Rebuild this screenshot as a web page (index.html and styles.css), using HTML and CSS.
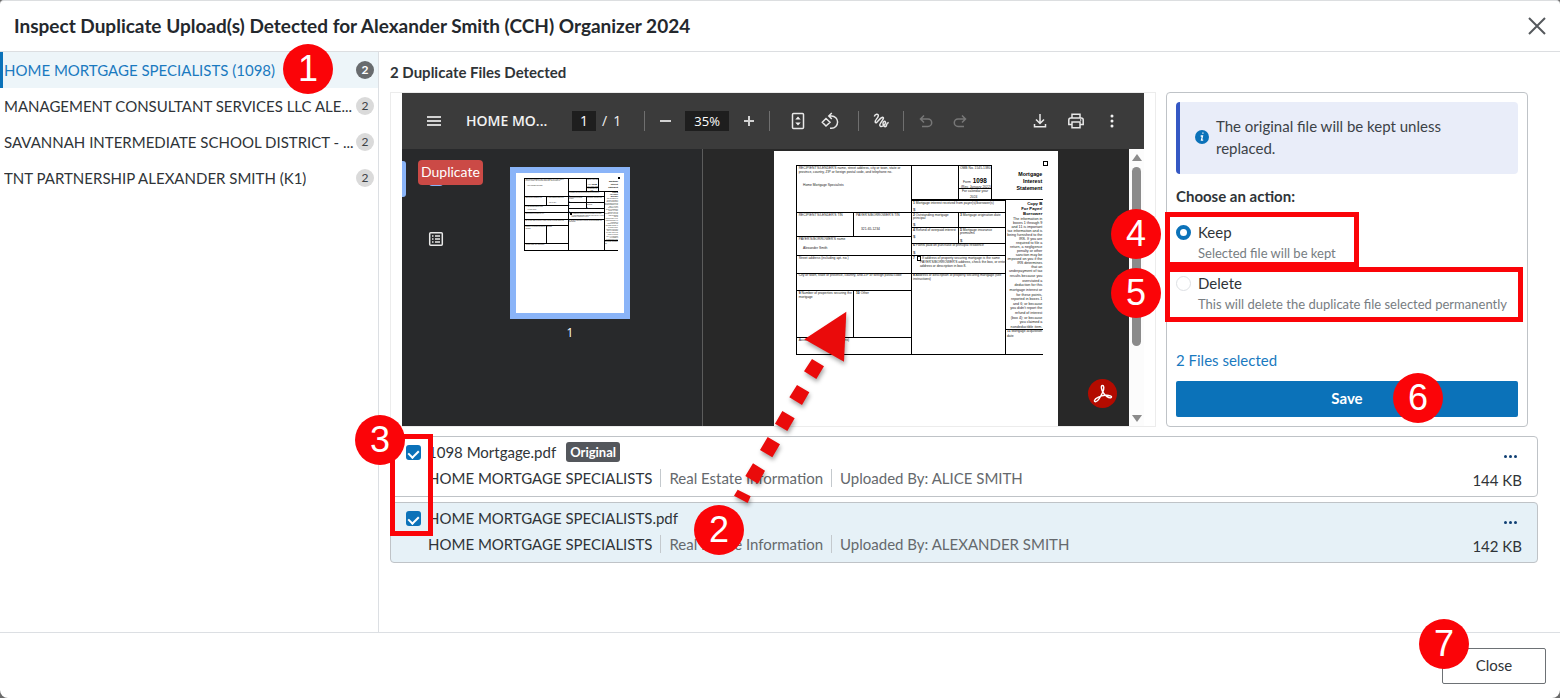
FILE: index.html
```html
<!DOCTYPE html>
<html lang="en">
<head>
<meta charset="utf-8">
<title>Inspect Duplicate Uploads</title>
<meta name="viewport" content="width=device-width, initial-scale=1">
<link rel="stylesheet" href="styles.css">
</head>
<body>
<div class="dialog" role="dialog" aria-labelledby="dialog-title">
  <header class="dialog-header">
    <h1 id="dialog-title">Inspect Duplicate Upload(s) Detected for Alexander Smith (CCH) Organizer 2024</h1>
    <button class="dismiss" type="button" aria-label="Close dialog">
      <svg width="20" height="20" viewBox="0 0 20 20"><path d="M2 2L18 18M18 2L2 18"/></svg>
    </button>
  </header>

  <div class="dialog-body">
    <nav class="groups" aria-label="Duplicate groups">
      <a class="group active" href="#g1"><span class="group-name">HOME MORTGAGE SPECIALISTS (1098)</span><span class="count">2</span><span class="step step-1">1</span></a>
      <a class="group" href="#g2"><span class="group-name">MANAGEMENT CONSULTANT SERVICES LLC ALE...</span><span class="count">2</span></a>
      <a class="group" href="#g3"><span class="group-name">SAVANNAH INTERMEDIATE SCHOOL DISTRICT - ...</span><span class="count">2</span></a>
      <a class="group" href="#g4"><span class="group-name">TNT PARTNERSHIP ALEXANDER SMITH (K1)</span><span class="count">2</span></a>
    </nav>

    <main class="content">
      <h2>2 Duplicate Files Detected</h2>
      <div class="review">
        <section class="preview" aria-label="File preview">
          <div class="toolbar">
            <button class="tool" type="button" aria-label="Menu"><svg width="16" height="16" viewBox="0 0 16 16"><path class="bold" d="M1 4H15M1 8H15M1 12H15"/></svg></button>
            <span class="doc-title">HOME MO...</span>
            <div class="pager"><input class="page-input" type="text" value="1" aria-label="Page"><span>/</span><span>1</span></div>
            <span class="divider"></span>
            <div class="tools">
              <button class="tool" type="button" aria-label="Zoom out"><svg width="16" height="16" viewBox="0 0 16 16"><path class="bold" d="M3 8H14"/></svg></button>
              <input class="zoom-input" type="text" value="35%" aria-label="Zoom">
              <button class="tool" type="button" aria-label="Zoom in"><svg width="16" height="16" viewBox="0 0 16 16"><path class="bold" d="M3 8H13M8 3V13"/></svg></button>
            </div>
            <span class="divider"></span>
            <div class="tools tools-wide">
              <button class="tool" type="button" aria-label="Fit to page"><svg width="18" height="18" viewBox="0 0 18 18"><rect x="3.500" y="1.500" width="11" height="15" rx="1"/><path class="fill" d="M6.300 7.500L9 4.500L11.700 7.500ZM6.300 10.500L9 13.500L11.700 10.500Z"/></svg></button>
              <button class="tool" type="button" aria-label="Rotate"><svg width="18" height="18" viewBox="0 0 18 18"><path d="M5 6.500L9 10.300L5 14L1.300 10.300ZM8.500 4H10.500A6 6 0 0 1 10.500 16.200H9M10.800 1L7.800 4L10.800 7"/></svg></button>
            </div>
            <span class="divider"></span>
            <div class="tools tools-edit">
              <button class="tool" type="button" aria-label="Annotate"><svg width="18" height="18" viewBox="0 0 18 18"><path d="M2.300 4.500C3 2 6.500 1.300 6.300 3.800C6 6.300 2.300 8.300 3.300 10.300C4.800 12.300 8 5.300 10.700 5.300C13.300 6 8 10.500 7.700 13C8 16.300 13.300 13.500 13.500 10.700C13.300 8 10.700 9.500 11 12C11.300 14.500 13 15.300 14.300 14C14.800 12.500 14.300 11 16.700 10.500"/></svg></button>
              <span class="divider"></span>
              <button class="tool dim" type="button" aria-label="Undo" disabled><svg width="18" height="18" viewBox="0 0 18 18"><path d="M7 3.500L3.500 7L7 10.500M3.500 7H11A3.700 3.700 0 0 1 11 14.400H5"/></svg></button>
              <button class="tool dim" type="button" aria-label="Redo" disabled><svg width="18" height="18" viewBox="0 0 18 18"><path d="M11 3.500L14.500 7L11 10.500M14.500 7H7A3.700 3.700 0 0 0 7 14.400H13"/></svg></button>
            </div>
            <div class="tools-end">
              <button class="tool" type="button" aria-label="Download"><svg width="18" height="18" viewBox="0 0 18 18"><path d="M9 2V11M5 7.500L9 11.500L13 7.500M3.500 12V14.700H14.500V12"/></svg></button>
              <button class="tool" type="button" aria-label="Print"><svg width="18" height="18" viewBox="0 0 18 18"><path d="M5 5.500V2.200H13V5.500M5 12.500H1.800V8Q1.800 6 3.800 6H14.200Q16.200 6 16.200 8V12.500H13M5 10H13V15.700H5Z"/><path d="M13 8H14.300"/></svg></button>
              <button class="tool" type="button" aria-label="More"><svg width="18" height="18" viewBox="0 0 18 18"><circle class="fill" cx="9" cy="4" r="1.500"/><circle class="fill" cx="9" cy="9" r="1.500"/><circle class="fill" cx="9" cy="14" r="1.500"/></svg></button>
            </div>
          </div>
          <div class="viewer">
            <div class="rail">
              <span class="rail-current"></span>
              <span class="rail-thumbs"></span>
              <span class="duplicate-tag">Duplicate</span>
              <button class="tool" type="button" aria-label="Document outline"><svg width="16" height="16" viewBox="0 0 16 16"><rect x="1.700" y="1.700" width="12.600" height="12.600" rx="1"/><path d="M4 5H5.500M7 5H12M4 8H5.500M7 8H12M4 11H5.500M7 11H12"/></svg></button>
            </div>
            <div class="thumbs">
              <figure class="thumb">
                <svg class="thumb-page" viewBox="-18 18 852 1104" aria-label="Page 1"><use href="#form1098"/></svg>
                <figcaption>1</figcaption>
              </figure>
            </div>
            <div class="canvas">
              <svg class="page" width="284" height="368" viewBox="-18 18 852 1104">
                <g id="form1098">
                  <g class="form-lines">
                    <path d="M50 61H635V163M50 61V628H789M395 61V628M536 61V163M536 130H635M395 163H789M395 167H677M677 163V628M50 203H395M221 203V274M50 274H395M50 332H395M50 385H395M50 436H395M221 436V577M50 577H395M395 203H677M536 203V295M395 247H677M395 295H677M395 332H677M395 385H677M677 553H789"/>
                    <path d="M412 333H422V347H412Z"/>
                    <path class="form-mark" d="M790 50H802V62H790Z"/>
                  </g>
                  <g class="form-text">
                    <text x="56" y="72">RECIPIENT'S/LENDER'S name, street address, city or town, state or</text>
                    <text x="56" y="83">province, country, ZIP or foreign postal code, and telephone no.</text>
                    <text x="69" y="122">Home Mortgage Specialists</text>
                    <text x="56" y="213">RECIPIENT'S/LENDER'S TIN</text>
                    <text x="228" y="213">PAYER'S/BORROWER'S TIN</text>
                    <text x="243" y="255">321-65-1234</text>
                    <text x="56" y="285">PAYER'S/BORROWER'S name</text>
                    <text x="69" y="312">Alexander Smith</text>
                    <text x="56" y="342">Street address (including apt. no.)</text>
                    <text x="56" y="394">City or town, state or province, country, and ZIP or foreign postal code</text>
                    <text x="56" y="447"><tspan class="strong">9</tspan> Number of properties securing the</text>
                    <text x="56" y="458">mortgage</text>
                    <text x="228" y="447"><tspan class="strong">10</tspan> Other</text>
                    <text x="56" y="588">Account number (see instructions)</text>
                    <text x="540" y="72">OMB No. 1545-1380</text>
                    <text x="549" y="113">Form</text>
                    <text class="form-number" x="578" y="114">1098</text>
                    <text x="543" y="128">(Rev. January 2022)</text>
                    <text x="546" y="141">For calendar year</text>
                    <text x="570" y="158">2024</text>
                    <text x="399" y="177"><tspan class="strong">1</tspan> Mortgage interest received from payer(s)/borrower(s)</text>
                    <text class="form-dollar" x="399" y="197">$</text>
                    <text x="399" y="213"><tspan class="strong">2</tspan> Outstanding mortgage</text>
                    <text x="399" y="222">principal</text>
                    <text class="form-dollar" x="399" y="243">$</text>
                    <text x="540" y="213"><tspan class="strong">3</tspan> Mortgage origination date</text>
                    <text x="399" y="258"><tspan class="strong">4</tspan> Refund of overpaid interest</text>
                    <text class="form-dollar" x="399" y="279">$</text>
                    <text x="540" y="258"><tspan class="strong">5</tspan> Mortgage insurance</text>
                    <text x="540" y="267">premiums</text>
                    <text class="form-dollar" x="540" y="291">$</text>
                    <text x="399" y="304"><tspan class="strong">6</tspan> Points paid on purchase of principal residence</text>
                    <text class="form-dollar" x="399" y="327">$</text>
                    <text x="399" y="342"><tspan class="strong">7</tspan></text>
                    <text x="426" y="342">If address of property securing mortgage is the same</text>
                    <text x="420" y="354">PAYER'S/BORROWER'S address, check the box, or enter</text>
                    <text x="420" y="366">address or description in box 8.</text>
                    <text x="399" y="394"><tspan class="strong">8</tspan> Address or description of property securing mortgage (see</text>
                    <text x="399" y="405">instructions)</text>
                    <text x="681" y="562"><tspan class="strong">11</tspan> Mortgage acquisition</text>
                    <text x="681" y="576">date</text>
                  </g>
                  <g class="form-title">
                    <text x="787" y="93">Mortgage</text>
                    <text x="787" y="114">Interest</text>
                    <text x="787" y="135">Statement</text>
                  </g>
                  <g class="form-copy">
                    <text x="787" y="179">Copy B</text>
                    <text x="787" y="194">For Payer/</text>
                    <text x="787" y="210">Borrower</text>
                  </g>
                  <g class="form-note">
                    <text x="787" y="224">The information in</text>
                    <text x="787" y="236">boxes 1 through 9</text>
                    <text x="787" y="248">and 11 is important</text>
                    <text x="787" y="260">tax information and is</text>
                    <text x="787" y="272">being furnished to the</text>
                    <text x="787" y="284">IRS. If you are</text>
                    <text x="787" y="296">required to file a</text>
                    <text x="787" y="308">return, a negligence</text>
                    <text x="787" y="320">penalty or other</text>
                    <text x="787" y="332">sanction may be</text>
                    <text x="787" y="344">imposed on you if the</text>
                    <text x="787" y="356">IRS determines</text>
                    <text x="787" y="368">that an</text>
                    <text x="787" y="380">underpayment of tax</text>
                    <text x="787" y="396">results because you</text>
                    <text x="787" y="410">overstated a</text>
                    <text x="787" y="423">deduction for this</text>
                    <text x="787" y="438">mortgage interest or</text>
                    <text x="787" y="452">for these points,</text>
                    <text x="787" y="465">reported in boxes 1</text>
                    <text x="787" y="479">and 6; or because</text>
                    <text x="787" y="492">you didn't report the</text>
                    <text x="787" y="506">refund of interest</text>
                    <text x="787" y="521">(box 4); or because</text>
                    <text x="787" y="534">you claimed a</text>
                    <text x="787" y="548">nondeductible item.</text>
                  </g>
                </g>
              </svg>
              <button class="acrobat" type="button" aria-label="Open in Acrobat"><svg width="20" height="20" viewBox="0 0 20 20"><path d="M9.500 1.500C7.300 1.500 8.800 6.500 10.200 8.700C12 11.700 15.800 14.500 18 13.700C20 12.300 16 10.800 12 11.300C8 11.700 2 14 1.500 16.500C1.200 18.500 4 18 6 14.800C8 11.800 11 6.500 10.800 3.200C10.700 2 10.300 1.500 9.500 1.500Z"/></svg></button>
            </div>
            <div class="scrollbar"><span class="arrow-up"></span><span class="thumb-bar"></span><span class="arrow-down"></span></div>
          </div>
        </section>

        <form class="actions">
          <div class="notice">
            <svg class="info" width="14" height="14" viewBox="0 0 14 14"><circle cx="7" cy="7" r="7"/><path d="M7.300 3.200H8.500M5.700 6H7.500L6.500 10.200H8.200"/></svg>
            <p>The original file will be kept unless replaced.</p>
          </div>
          <fieldset>
            <legend>Choose an action:</legend>
            <div class="option option-keep">
              <input type="radio" name="action" id="keep" checked>
              <label for="keep">Keep<small>Selected file will be kept</small></label>
              <span class="frame"></span><span class="step step-4">4</span>
            </div>
            <div class="option option-delete">
              <input type="radio" name="action" id="delete">
              <label for="delete">Delete<small>This will delete the duplicate file selected permanently</small></label>
              <span class="frame"></span><span class="step step-5">5</span>
            </div>
          </fieldset>
          <p class="selected">2 Files selected</p>
          <div class="save-wrap"><button class="save" type="button">Save</button><span class="step step-6">6</span></div>
        </form>
      </div>

      <div class="files">
        <article class="file">
          <input type="checkbox" id="file1" checked>
          <div class="file-info">
            <div class="file-name"><label for="file1">1098 Mortgage.pdf</label><span class="original-tag">Original</span></div>
            <div class="file-meta"><span class="owner">HOME MORTGAGE SPECIALISTS</span><span>Real Estate Information</span><span>Uploaded By: ALICE SMITH</span></div>
          </div>
          <div class="file-end"><button class="more" type="button" aria-label="File options"><i></i><i></i><i></i></button><span>144 KB</span></div>
        </article>
        <article class="file current">
          <input type="checkbox" id="file2" checked>
          <div class="file-info">
            <div class="file-name"><label for="file2">HOME MORTGAGE SPECIALISTS.pdf</label></div>
            <div class="file-meta"><span class="owner">HOME MORTGAGE SPECIALISTS</span><span>Real Estate Information</span><span>Uploaded By: ALEXANDER SMITH</span></div>
          </div>
          <div class="file-end"><button class="more" type="button" aria-label="File options"><i></i><i></i><i></i></button><span>142 KB</span></div>
        </article>
        <span class="frame frame-3"></span><span class="step step-3">3</span>
        <svg class="pointer" width="125" height="205" viewBox="120 15 375 615" aria-hidden="true">
          <path d="M469 35L343 118L462 185Z"/>
          <path d="M366 177L402 199L379 237L342 214ZM321 255L358 277L336 315L298 292ZM277 333L314 355L292 393L255 371ZM233 411L270 433L247 472L210 450ZM189 490L225 512L204 551L166 528ZM143 569L182 589L173 609L132 587Z"/>
        </svg>
        <span class="step step-2">2</span>
      </div>
    </main>
  </div>

  <footer class="dialog-footer">
    <div class="close-wrap"><button class="close" type="button">Close</button><span class="step step-7">7</span></div>
  </footer>
</div>
</body>
</html>
```

FILE: styles.css
```css
* { box-sizing: border-box; }

body {
  margin: 0;
  background: #6b6b6b;
  color: #2f3438;
  font: 15px/22px Lato, "Open Sans", sans-serif;
}

h1, h2, p, fieldset, legend, figure { margin: 0; padding: 0; border: 0; }
button, input { font: inherit; color: inherit; }
button { padding: 0; border: 0; background: none; }

.dialog {
  display: flex;
  flex-direction: column;
  min-height: 100vh;
  background: #fff;
  border-top: 1px solid #dcdee0;
  border-radius: 4px 4px 8px 8px;
}

.dialog-header {
  display: flex;
  align-items: center;
  justify-content: space-between;
  height: 51px;
  padding: 0 13px 0 14px;
  border-bottom: 1px solid #dcdee1;
}
h1 { color: #24282d; font-size: 19px; font-weight: 700; }
.dismiss { display: flex; }
.dismiss svg { fill: none; stroke: #55595d; stroke-width: 2; }

.dialog-body { display: flex; flex: 1; }

/* Sidebar */
.groups {
  flex: none;
  width: 379px;
  border-right: 1px solid #dcdfe3;
}
.group {
  position: relative;
  display: flex;
  align-items: center;
  justify-content: space-between;
  height: 36px;
  padding: 0 4px 0 1px;
  border-left: 3px solid transparent;
  color: #2f3438;
  text-decoration: none;
}
.group-name { min-width: 0; overflow: hidden; text-overflow: ellipsis; white-space: nowrap; }
.group.active { border-color: #0b72b9; background: #edf5f9; color: #1a7ac0; }
.count {
  flex: none;
  width: 18px;
  height: 18px;
  border-radius: 50%;
  background: #dadada;
  color: #3c4145;
  font-size: 12px;
  line-height: 18px;
  text-align: center;
}
.active .count { background: #686b6e; color: #fff; font-weight: 700; }

/* Content */
.content { flex: 1; min-width: 0; padding: 9px 22px 10px 11px; }
h2 { margin-bottom: 9px; font-size: 15px; font-weight: 700; }
.review { display: flex; gap: 10px; margin-right: 10px; }

.preview {
  flex: 1;
  display: flex;
  flex-direction: column;
  min-width: 0;
  padding: 0 11px;
  border: 1px solid #ececec;
}

.toolbar {
  display: flex;
  align-items: center;
  height: 56px;
  padding: 0 20px;
  background: #3b3b3b;
  color: #f2f2f2;
  font-family: "Open Sans", sans-serif;
  font-size: 14px;
}
.tool {
  display: flex;
  align-items: center;
  justify-content: center;
  flex: none;
  width: 24px;
  height: 24px;
}
.tool svg { fill: none; stroke: #e8e8e8; stroke-width: 1.5; }
.tool .bold { stroke-width: 2; stroke: #d2d2d2; }
.tool .fill { fill: #f1f1f1; stroke: none; }
.tool.dim svg { stroke: #777; }
.doc-title {
  width: 84px;
  margin: 0 22px 0 20px;
  font-weight: 600;
  white-space: nowrap;
}
.pager { display: flex; align-items: center; gap: 6px; margin-right: 23px; }
.page-input, .zoom-input {
  height: 20px;
  padding: 0;
  border: 0;
  background: #1e1e1e;
  color: #fff;
  line-height: 20px;
  text-align: center;
}
.page-input { width: 24px; }
.zoom-input { width: 44px; font-size: 13px; }
.divider { flex: none; width: 1px; height: 20px; background: #6f6f6f; }
.tools { display: flex; align-items: center; gap: 8px; padding: 0 8px; }
.tools-wide { padding: 0 16px; }
.tools-edit { gap: 10px; padding: 0 10px; }
.tools-end { display: flex; gap: 12px; margin-left: auto; }

.viewer { display: flex; flex: none; height: 277px; background: #282828; }
.rail { position: relative; flex: none; width: 64px; padding: 78px 22px 0; background: #28292b; }
.rail-current {
  position: absolute;
  top: 12px;
  left: 0;
  width: 4px;
  height: 36px;
  border-radius: 0 3px 3px 0;
  background: #8ab4f8;
}
.rail-thumbs {
  position: absolute;
  top: 22px;
  left: 27px;
  width: 14px;
  height: 15px;
  border-radius: 3px;
  background: #8ab4f8;
}
.duplicate-tag {
  position: absolute;
  top: 11px;
  left: 16px;
  padding: 1px 3px 2px;
  border-radius: 4px;
  background: #cb4a46;
  color: #fff;
  font-size: 14px;
}
.thumbs { flex: none; width: 237px; padding: 18px 0 0 44px; border-right: 1px solid #5c5c5c; background: #28292b; }
.thumb { width: 120px; color: #fff; font: 12px/18px "Open Sans", sans-serif; text-align: center; }
.thumb-page { display: block; width: 120px; border: 6px solid #8ab4f8; background: #fff; }
.thumb figcaption { margin-top: 5px; }
.canvas {
  position: relative;
  display: flex;
  flex: 1;
  align-items: flex-start;
  justify-content: center;
  padding-top: 2px;
  overflow: hidden;
}
.page { flex: none; background: #fff; }
.acrobat {
  position: absolute;
  right: 12px;
  bottom: 18px;
  display: flex;
  align-items: center;
  justify-content: center;
  width: 29px;
  height: 29px;
  border-radius: 50%;
  background: #b30b00;
}
.acrobat svg { fill: none; stroke: #fff; stroke-width: 1.4; }
.scrollbar {
  display: flex;
  flex: none;
  flex-direction: column;
  align-items: center;
  width: 15px;
  padding: 5px 0 4px;
  background: #fcfcfc;
}
.arrow-up { border: 5px solid transparent; border-top: 0; border-bottom: 7px solid #8b8b8b; }
.arrow-down { margin-top: auto; border: 5px solid transparent; border-bottom: 0; border-top: 7px solid #8b8b8b; }
.thumb-bar { width: 9px; height: 179px; margin-top: 6px; border-radius: 5px; background: #8b8b8b; }

/* Mortgage form drawing */
.form-lines { fill: none; stroke: #000; stroke-width: 1px; shape-rendering: crispEdges; }
.form-lines path { vector-effect: non-scaling-stroke; }
.form-text, .form-note { fill: #222; font: 10px "Liberation Sans", sans-serif; }
.form-text .strong { font-weight: 700; }
.form-text .form-number { font-size: 19px; font-weight: 700; fill: #000; }
.form-text .form-dollar { font-size: 13px; }
.form-title, .form-copy, .form-note { text-anchor: end; }
.form-note { font-size: 11px; }
.form-title { font: 700 16px "Liberation Sans", sans-serif; }
.form-copy { font: 700 13px "Liberation Sans", sans-serif; }

/* Action panel */
.actions {
  display: flex;
  flex-direction: column;
  flex: 0 0 362px;
  padding: 9px;
  border: 1px solid #bfc3c7;
  border-radius: 4px;
}
.notice {
  display: flex;
  align-items: center;
  gap: 7px;
  height: 72px;
  padding: 0 40px 2px 15px;
  border-left: 4px solid #3558c4;
  border-radius: 4px;
  background: #e9edf9;
  color: #3c4247;
}
.info { flex: none; fill: #0b72b9; }
.info path { fill: none; stroke: #fff; stroke-width: 1.3; }
fieldset { margin-top: 11px; }
legend { font-weight: 700; }
.option {
  position: relative;
  display: flex;
  gap: 7px;
  margin-top: 9px;
}
.option-keep { margin-top: 14px; }
.option label { display: flex; flex-direction: column; }
.option small { color: #777d82; font-size: 13px; line-height: 20px; white-space: nowrap; }
.option input {
  flex: none;
  appearance: none;
  width: 15px;
  height: 15px;
  margin: 4px 0 0;
  border: 1px solid #dde0e4;
  border-radius: 50%;
  background: #fff;
}
.option input:checked { border: 4px solid #0b72b9; }
.selected { margin-top: auto; color: #1a7ac0; }
.save-wrap { position: relative; margin-top: 10px; }
.save {
  display: block;
  width: 100%;
  height: 36px;
  padding-bottom: 2px;
  border-radius: 2px;
  background: #0b72b9;
  color: #fff;
  font-weight: 700;
}

/* File list */
.files { position: relative; display: flex; flex-direction: column; gap: 5px; margin-top: 9px; }
.file {
  display: flex;
  gap: 7px;
  padding: 4px 15px 5px;
  border: 1px solid #bfc3c7;
  border-radius: 4px;
}
.file.current { background: #e6f1f7; }
.file input {
  flex: none;
  appearance: none;
  width: 15px;
  height: 15px;
  margin: 4px 0 0;
  border-radius: 3px;
  background: #0b72b9;
}
.file input::before {
  content: "";
  display: block;
  width: 5px;
  height: 8px;
  margin: 3px auto 0;
  border: solid #fff;
  border-width: 0 2px 2px 0;
  rotate: 45deg;
}
.file-info { display: flex; flex: 1; flex-direction: column; gap: 4px; }
.file-name { display: flex; align-items: center; gap: 10px; height: 22px; }
.original-tag {
  padding: 0 4px;
  border-radius: 3px;
  background: #54575c;
  color: #fff;
  font-size: 13px;
  font-weight: 700;
  line-height: 20px;
}
.file-meta { display: flex; align-items: center; height: 22px; color: #65696d; }
.file-meta span + span { margin-left: 8px; padding-left: 8px; border-left: 1px solid #c4c9cd; line-height: 18px; }
.file-meta .owner { color: #2f3438; }
.file-end { display: flex; flex-direction: column; align-items: flex-end; gap: 2px; padding-top: 4px; }
.more { display: flex; align-items: center; gap: 2px; height: 22px; padding-right: 5px; }
.more i { width: 3px; height: 3px; border-radius: 50%; background: #0f3f73; }

/* Footer */
.dialog-footer {
  display: flex;
  justify-content: flex-end;
  padding: 15px 14px 14px;
  border-top: 1px solid #dcdfe3;
}
.close-wrap { position: relative; }
.close {
  width: 104px;
  height: 36px;
  padding-bottom: 2px;
  border: 1px solid #6d7175;
  border-radius: 2px;
  background: #fff;
}

/* Walkthrough markers laid over the dialog */
.step {
  position: absolute;
  z-index: 2;
  width: 50px;
  height: 50px;
  border-radius: 50%;
  background: #fb0408;
  color: #fff;
  font: 36px/50px "Liberation Sans", sans-serif;
  text-align: center;
}
.frame { position: absolute; z-index: 1; border: 5px solid #fb0408; }
.step-1 { left: 280px; top: -8px; }
.step-2 { left: 304px; top: 69px; }
.step-3 { left: -35px; top: -21px; }
.step-4, .step-5 { left: -65px; }
.step-4 { top: -12px; }
.step-5 { top: -4px; }
.step-6 { right: 75px; top: -8px; }
.step-7 { left: -23px; top: -29px; }
.frame-3 { left: 0; top: -2px; width: 43px; height: 102px; }
.option .frame { left: -11px; height: 55px; }
.option-keep .frame { top: -9px; width: 194px; }
.option-delete .frame { top: -5px; width: 358px; }
.pointer { position: absolute; left: 340px; top: -131px; fill: #ea0b0b; filter: drop-shadow(1px 3px 2px rgb(0 0 0 / 35%)); }
```
